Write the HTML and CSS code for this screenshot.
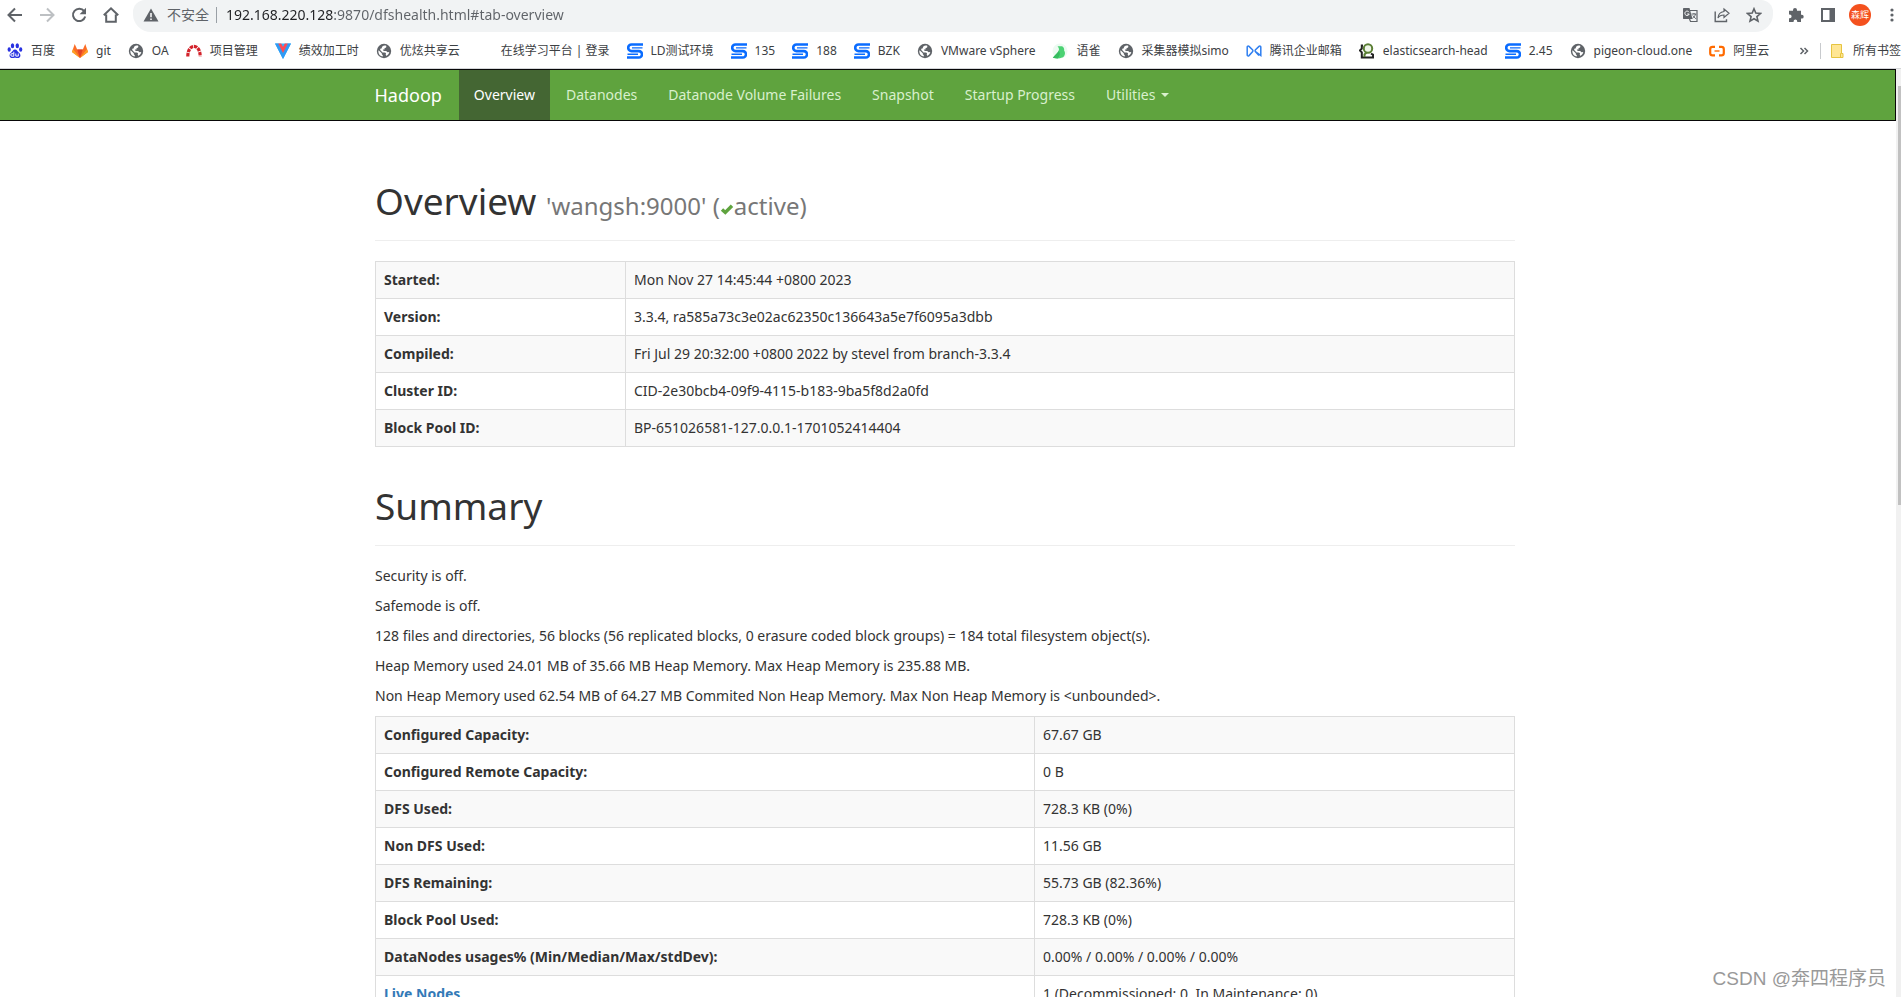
FILE: index.html
```html
<!DOCTYPE html>
<html lang="zh-CN">
<head>
<meta charset="utf-8">
<title>Namenode information</title>
<link rel="stylesheet" href="styles.css">
</head>
<body>
<svg class="defs" aria-hidden="true">
  <symbol id="globe" viewBox="0 0 16 16"><circle cx="8" cy="8" r="7.2" fill="#5f6368"/><path d="M2.600 7.200l3.200 3.100v1l1 1v1.300C4.200 13.300 2.300 11 2.300 8.200zM6.300 3.600C7.600 2.300 9.500 2.500 10.400 3l-.3 1.500-1.600.8v1.300H6.800l.9 1.500h2.500l1.300 1.200 1.800-.2c-.3 1.700-1.400 3-2.800 3.800l-.8-1.300.3-1.500-1.500-.7H6.500L4.200 7V5.800l1.300-.4z" fill="#fff"/></symbol>
  <symbol id="simo" viewBox="0 0 16 16"><path d="M16 1.500H4.500a3.300 3.300 0 0 0 0 6.600h7.300a3.100 3.100 0 0 1 0 6.400H0" fill="none" stroke="#0a6cff" stroke-width="2.600"/><path d="M15.500 4.900H5M11 11.200H.5" fill="none" stroke="#0a6cff" stroke-width="1.400"/></symbol>
</svg>

<header class="browser">
  <div class="toolbar">
    <button class="tool" aria-label="后退"><svg viewBox="0 0 16 16"><path d="M15 8H2M8 1.500L1.500 8 8 14.500" fill="none" stroke="#5f6368" stroke-width="2"/></svg></button>
    <button class="tool" aria-label="前进"><svg viewBox="0 0 16 16"><path d="M1 8h13M8 1.500L14.500 8 8 14.500" fill="none" stroke="#bdc0c3" stroke-width="2"/></svg></button>
    <button class="tool" aria-label="刷新"><svg viewBox="0 0 16 16"><path d="M13.200 4.200A6.200 6.200 0 1 0 14.200 9.500" fill="none" stroke="#5f6368" stroke-width="2"/><path d="M15 .8v6.400H8.600z" fill="#5f6368"/></svg></button>
    <button class="tool" aria-label="主页"><svg viewBox="0 0 16 16"><path d="M.8 8.300L8 1.400l7.200 6.900M3.200 7.500v7.300h9.600V7.500" fill="none" stroke="#5f6368" stroke-width="2"/></svg></button>
    <div class="omnibox">
      <svg class="warn" viewBox="0 0 16 16"><path d="M8 1.500L15.500 14.500H.5z" fill="#5f6368"/><path d="M8 6v4.200M8 11.500V13" stroke="#fff" stroke-width="1.500"/></svg>
      <label class="insecure" for="url">不安全</label>
      <input class="url" id="url" type="text" value="192.168.220.128:9870/dfshealth.html#tab-overview">
      <button class="tool" aria-label="翻译"><svg viewBox="0 0 16 16"><path d="M6 3.500h9v11H8.500l-1-2.500" fill="none" stroke="#5f6368" stroke-width="1.200"/><path d="M1.500 1h6l3 11h-9A.8.8 0 0 1 1 11.200V1.800z" fill="#5f6368"/><path d="M7 5.200A2.200 2.200 0 1 0 7.200 7H5.200" fill="none" stroke="#fff" stroke-width="1"/><path d="M9.500 7h4.800M12 6v1M13.500 7c-.5 2-1.500 3.200-3 4.200M10.800 8.500l3 3.300" fill="none" stroke="#5f6368" stroke-width="1"/></svg></button>
      <button class="tool" aria-label="分享"><svg viewBox="0 0 16 16"><path d="M1.200 4.500v10h11.300v-2.200" fill="none" stroke="#5f6368" stroke-width="1.400"/><path d="M10 2l5 4.200-5 4.200V8C7 8 5.200 9 4 11c.2-3.500 2.300-6 6-6.500z" fill="none" stroke="#5f6368" stroke-width="1.200"/></svg></button>
      <button class="tool" aria-label="收藏"><svg viewBox="0 0 16 16"><path d="M8 1.800l1.800 4.300 4.700.4-3.600 3.100 1.100 4.600L8 11.800l-4 2.400 1.100-4.600L1.500 6.500l4.700-.4z" fill="none" stroke="#5f6368" stroke-width="1.600"/></svg></button>
    </div>
    <div class="actions">
      <button class="tool" aria-label="扩展程序"><svg viewBox="0 0 16 16"><path d="M1 3.800h4V3a2 2 0 0 1 4 0v.8h4v4h.8a1.900 1.900 0 0 1 0 3.800H13V15H9.200v-.8a1.800 1.800 0 0 0-3.600 0v.8H1v-3.800h.8a1.800 1.800 0 0 0 0-3.600H1z" fill="#5f6368"/></svg></button>
      <button class="tool" aria-label="侧边栏"><svg viewBox="0 0 16 16"><path d="M1 1h14v14H1zM3 3v10h6.500V3z" fill="#5f6368" fill-rule="evenodd"/></svg></button>
      <button class="avatar">森辉</button>
      <button class="tool" aria-label="菜单"><svg viewBox="0 0 16 16"><g fill="#5f6368"><circle cx="8" cy="3" r="1.600"/><circle cx="8" cy="8" r="1.600"/><circle cx="8" cy="13" r="1.600"/></g></svg></button>
    </div>
  </div>

  <nav class="bookmarks" aria-label="书签">
    <a class="mark" href="#"><svg viewBox="0 0 16 16"><g fill="#2932e1"><ellipse cx="5.500" cy="2.800" rx="1.700" ry="2.500"/><ellipse cx="10.300" cy="2.800" rx="1.700" ry="2.500"/><ellipse cx="2.200" cy="6.500" rx="1.600" ry="2.200"/><ellipse cx="13.700" cy="6.500" rx="1.600" ry="2.200"/><path d="M8 6.500c2 0 2.500 2 4 3.200 2.500 2 1.500 5.300-1.200 5.300-1.200 0-1.800-.3-2.800-.3s-1.600.3-2.800.3c-2.700 0-3.700-3.300-1.200-5.300C5.500 8.500 6 6.500 8 6.500z"/></g><path d="M6.800 8.800v4.400H5a1.200 1.200 0 0 1 0-2.500h1.500M8.800 10.500v2.600h2.500v-2.600" fill="none" stroke="#fff" stroke-width="1"/></svg>百度</a>
    <a class="mark" href="#"><svg viewBox="0 0 16 16"><path d="M8 15L0 9l2.700-8 2.500 5.500h5.600L13.300 1 16 9z" fill="#fc6d26"/><path d="M8 15L5.200 6.500h5.600z" fill="#e24329"/><path d="M0 9l1-3 7 9zM16 9l-1-3-7 9z" fill="#fca326"/></svg>git</a>
    <a class="mark" href="#"><svg><use href="#globe"/></svg>OA</a>
    <a class="mark" href="#"><svg viewBox="0 0 16 16"><path d="M1.800 13.500C1.800 0 14.200 0 14.200 13.500" fill="none" stroke="#d3232b" stroke-width="3.200" stroke-dasharray="3.500 .8"/></svg>项目管理</a>
    <a class="mark" href="#"><svg viewBox="0 0 16 16"><path d="M0 .5h16L8 16z" fill="#35b5ff"/><path d="M0 .5h3.500L8 9.500 12.500.5H16L8 16z" fill="#2f9bf5"/><path d="M3.200.5h3L8 4l1.800-3.500h3L8 10z" fill="#ff4b55"/></svg>绩效加工时</a>
    <a class="mark" href="#"><svg><use href="#globe"/></svg>优炫共享云</a>
    <a class="mark" href="#"><svg></svg>在线学习平台 | 登录</a>
    <a class="mark" href="#"><svg><use href="#simo"/></svg>LD测试环境</a>
    <a class="mark" href="#"><svg><use href="#simo"/></svg>135</a>
    <a class="mark" href="#"><svg><use href="#simo"/></svg>188</a>
    <a class="mark" href="#"><svg><use href="#simo"/></svg>BZK</a>
    <a class="mark" href="#"><svg><use href="#globe"/></svg>VMware vSphere</a>
    <a class="mark" href="#"><svg viewBox="0 0 16 16"><circle cx="8" cy="8" r="7.500" fill="#edfaf2"/><path d="M5.500 3.200h4.600c1.500 1 2.400 2.500 2 4.200 1.800 2.500.8 6-2 7.200-3 1.300-6.500 1-9.300.2C3.500 12 6.500 9.500 7 6.500c0-1-.5-2.300-1.500-3.300z" fill="#4bd273"/><path d="M.8 14.800C3 12 5.500 10 6.600 8c2 1.500 1.500 5-1 7.600z" fill="#36bd60"/></svg>语雀</a>
    <a class="mark" href="#"><svg><use href="#globe"/></svg>采集器模拟simo</a>
    <a class="mark" href="#"><svg viewBox="0 0 16 16"><path d="M14.800 4v8.500L9.500 8.700a1.400 1.400 0 0 1 0-2L13 3.400c.8-.7 1.800-.3 1.800.6zM1.200 12V4c0-.9 1-1.300 1.800-.6l3.500 3.300a1.400 1.400 0 0 1 0 2L3 12.600c-.8.700-1.800.3-1.800-.6zM9.500 8.700l3.500 3.900" fill="none" stroke="#2f7ff0" stroke-width="1.500"/></svg>腾讯企业邮箱</a>
    <a class="mark" href="#"><svg viewBox="0 0 16 16"><path d="M4 2.500H2.800v3L1 7.500l1.800 1.800v5.200H14v-2.800l-2-1" fill="none" stroke="#222" stroke-width="2"/><path d="M5.500 14v-2.500L8 9" fill="none" stroke="#5b7f35" stroke-width="2"/><circle cx="9" cy="5.500" r="4.200" fill="#eef5e8" stroke="#5b7f35" stroke-width="2"/></svg>elasticsearch-head</a>
    <a class="mark" href="#"><svg><use href="#simo"/></svg>2.45</a>
    <a class="mark" href="#"><svg><use href="#globe"/></svg>pigeon-cloud.one</a>
    <a class="mark" href="#"><svg viewBox="0 0 16 16"><path d="M6 3.800H3.500A2.300 2.300 0 0 0 1.200 6v4.200a2.300 2.300 0 0 0 2.300 2.200H6M10 3.800h2.500A2.300 2.300 0 0 1 14.800 6v4.200a2.300 2.300 0 0 1-2.300 2.200H10" fill="none" stroke="#ff6a00" stroke-width="2.200"/><path d="M5.500 8h5" stroke="#ff6a00" stroke-width="1.400"/></svg>阿里云</a>
    <div class="more">
      <button class="tool" aria-label="更多书签"><svg viewBox="0 0 16 16"><path d="M4.500 5l3 3-3 3M8.500 5l3 3-3 3" fill="none" stroke="#5f6368" stroke-width="1.500"/></svg></button>
      <a class="mark all" href="#"><svg viewBox="0 0 16 16"><path d="M2.500 1.500h10v9h1.500v4H2.500z" fill="#ffe694" stroke="#e6c440"/><path d="M11.500 14.500v-4h1" fill="none" stroke="#e6c440"/></svg>所有书签</a>
    </div>
  </nav>
</header>

<div class="viewport">
  <div class="page">
    <nav class="navbar">
      <div class="container">
        <a class="brand" href="#">Hadoop</a>
        <ul class="tabs">
          <li><a class="tab active" href="#tab-overview">Overview</a></li>
          <li><a class="tab" href="#">Datanodes</a></li>
          <li><a class="tab" href="#">Datanode Volume Failures</a></li>
          <li><a class="tab" href="#">Snapshot</a></li>
          <li><a class="tab" href="#">Startup Progress</a></li>
          <li><a class="tab" href="#">Utilities<span class="caret"></span></a></li>
        </ul>
      </div>
    </nav>

    <main class="container content">
      <h1 class="title">Overview <small>'wangsh:9000' (<svg class="ok" viewBox="0 0 14 12"><path d="M2 6.500l3.300 3L12 2.800" fill="none" stroke="#5fa33e" stroke-width="3.400"/></svg>active)</small></h1>
      <table class="info overview">
        <tr><th scope="row">Started:</th><td>Mon Nov 27 14:45:44 +0800 2023</td></tr>
        <tr><th scope="row">Version:</th><td>3.3.4, ra585a73c3e02ac62350c136643a5e7f6095a3dbb</td></tr>
        <tr><th scope="row">Compiled:</th><td>Fri Jul 29 20:32:00 +0800 2022 by stevel from branch-3.3.4</td></tr>
        <tr><th scope="row">Cluster ID:</th><td>CID-2e30bcb4-09f9-4115-b183-9ba5f8d2a0fd</td></tr>
        <tr><th scope="row">Block Pool ID:</th><td>BP-651026581-127.0.0.1-1701052414404</td></tr>
      </table>

      <h1 class="title">Summary</h1>
      <p>Security is off.</p>
      <p>Safemode is off.</p>
      <p>128 files and directories, 56 blocks (56 replicated blocks, 0 erasure coded block groups) = 184 total filesystem object(s).</p>
      <p>Heap Memory used 24.01 MB of 35.66 MB Heap Memory. Max Heap Memory is 235.88 MB.</p>
      <p>Non Heap Memory used 62.54 MB of 64.27 MB Commited Non Heap Memory. Max Non Heap Memory is &lt;unbounded&gt;.</p>
      <table class="info summary">
        <tr><th scope="row">Configured Capacity:</th><td>67.67 GB</td></tr>
        <tr><th scope="row">Configured Remote Capacity:</th><td>0 B</td></tr>
        <tr><th scope="row">DFS Used:</th><td>728.3 KB (0%)</td></tr>
        <tr><th scope="row">Non DFS Used:</th><td>11.56 GB</td></tr>
        <tr><th scope="row">DFS Remaining:</th><td>55.73 GB (82.36%)</td></tr>
        <tr><th scope="row">Block Pool Used:</th><td>728.3 KB (0%)</td></tr>
        <tr><th scope="row">DataNodes usages% (Min/Median/Max/stdDev):</th><td>0.00% / 0.00% / 0.00% / 0.00%</td></tr>
        <tr><th scope="row"><a href="#">Live Nodes</a></th><td>1 (Decommissioned: 0, In Maintenance: 0)</td></tr>
      </table>
    </main>
  </div>
  <div class="scrollbar"><div class="thumb"></div></div>
  <div class="watermark">CSDN @奔四程序员</div>
</div>
</body>
</html>
```

FILE: styles.css
```css
* { box-sizing: border-box; }

body {
  margin: 0;
  height: 100vh;
  display: flex;
  flex-direction: column;
  overflow: hidden;
  background: #fff;
  color: #333;
  font: 14px/20px "Noto Sans", "Noto Sans CJK SC", sans-serif;
}

a { color: #337ab7; text-decoration: none; }

button {
  border: 0;
  padding: 0;
  background: none;
  font: inherit;
}

.defs { position: absolute; width: 0; height: 0; }

/* Browser chrome */
.browser {
  flex: none;
  border-bottom: 1px solid #d5d7da;
}

.toolbar {
  display: flex;
  align-items: center;
  gap: 16px;
  height: 32px;
  padding: 0 7px 2px;
}

.tool { width: 16px; height: 16px; flex: none; }
.tool svg { display: block; width: 16px; height: 16px; }

.omnibox {
  flex: 1;
  display: flex;
  align-items: center;
  gap: 16px;
  height: 32px;
  margin: 0 -1px -2px -2px;
  padding: 0 11px 2px 10px;
  border-radius: 12px 12px 18px 18px;
  background: #f1f3f4;
}

.warn { width: 16px; height: 16px; }

.insecure {
  margin-left: -8px;
  padding-right: 7px;
  border-right: 1px solid #9aa0a6;
  color: #5f6368;
  line-height: 16px;
}

.url {
  flex: 1;
  min-width: 0;
  margin-left: -7px;
  padding: 0;
  border: 0;
  outline: 0;
  font: 14px/20px "Noto Sans", sans-serif;
  background: linear-gradient(90deg, #202124 108px, #5f6368 108px);
  -webkit-background-clip: text;
  background-clip: text;
  color: transparent;
}

.actions { display: flex; align-items: center; gap: 16px; }
.actions .avatar { margin: 0 -3px; }
.actions .tool:last-child { margin-right: -6px; }

.avatar {
  width: 22px;
  height: 22px;
  border-radius: 50%;
  background: #f4511e;
  color: #fff;
  font-size: 9px;
  line-height: 22px;
}

.bookmarks {
  display: flex;
  align-items: center;
  gap: 17px;
  height: 36px;
  padding: 2px 0 0 7px;
  white-space: nowrap;
}

.mark {
  display: flex;
  align-items: center;
  gap: 8px;
  color: #3c4043;
  font-size: 12px;
}

.mark svg { width: 16px; height: 16px; flex: none; }

.more {
  display: flex;
  align-items: center;
  gap: 8px;
  margin-left: auto;
}

.all { padding-left: 8px; border-left: 1px solid #c8cacd; line-height: 16px; }

/* Page */
.viewport {
  position: relative;
  flex: 1;
  min-height: 0;
  display: flex;
}

.page { flex: 1; min-width: 0; overflow: hidden; }

.container {
  width: 100%;
  max-width: 1146px;
  margin: 0 auto;
  padding-right: 6px;
}

.navbar {
  border: 1px solid #080808;
  border-left: 0;
  background: #5fa33e;
}

.navbar .container { display: flex; }

.brand {
  padding: 15px 17px 15px 0;
  color: #fff;
  font-size: 18px;
}

.tabs {
  display: flex;
  gap: 1px;
  margin: 0;
  padding: 0;
  list-style: none;
}

.tab {
  display: flex;
  align-items: center;
  padding: 15px;
  color: #d9f0cd;
}

.tab.active { background: #446633; color: #fff; }

.caret {
  margin-left: 6px;
  border: 4px solid transparent;
  border-top-color: currentColor;
  border-bottom: 0;
}

.content { padding-top: 60px; }

.title {
  margin: 0 0 20px;
  padding-bottom: 19px;
  border-bottom: 1px solid #eee;
  font-size: 37px;
  font-weight: 400;
  line-height: 40px;
}

.title small { color: #777; font-size: 24px; line-height: 24px; }
.ok { width: 14px; height: 12px; }

.info {
  width: 100%;
  border-collapse: collapse;
  table-layout: fixed;
}

.info th,
.info td {
  padding: 8px;
  border: 1px solid #ddd;
  text-align: left;
}

.info tr:nth-child(odd) { background: #f9f9f9; }
.overview { margin-bottom: 39px; }
.overview th { width: 250px; }
.summary th { width: 659px; }

p { margin: 0 0 10px; }

.scrollbar {
  flex: none;
  width: 5px;
  padding: 17px 0 0 2px;
  background: #f1f1f1;
}

.thumb { height: 46%; background: #c1c1c1; }

.watermark {
  position: absolute;
  right: 15px;
  bottom: 5px;
  color: #999;
  font: 19px/26px "Liberation Sans", "Noto Sans CJK SC", sans-serif;
}
```
